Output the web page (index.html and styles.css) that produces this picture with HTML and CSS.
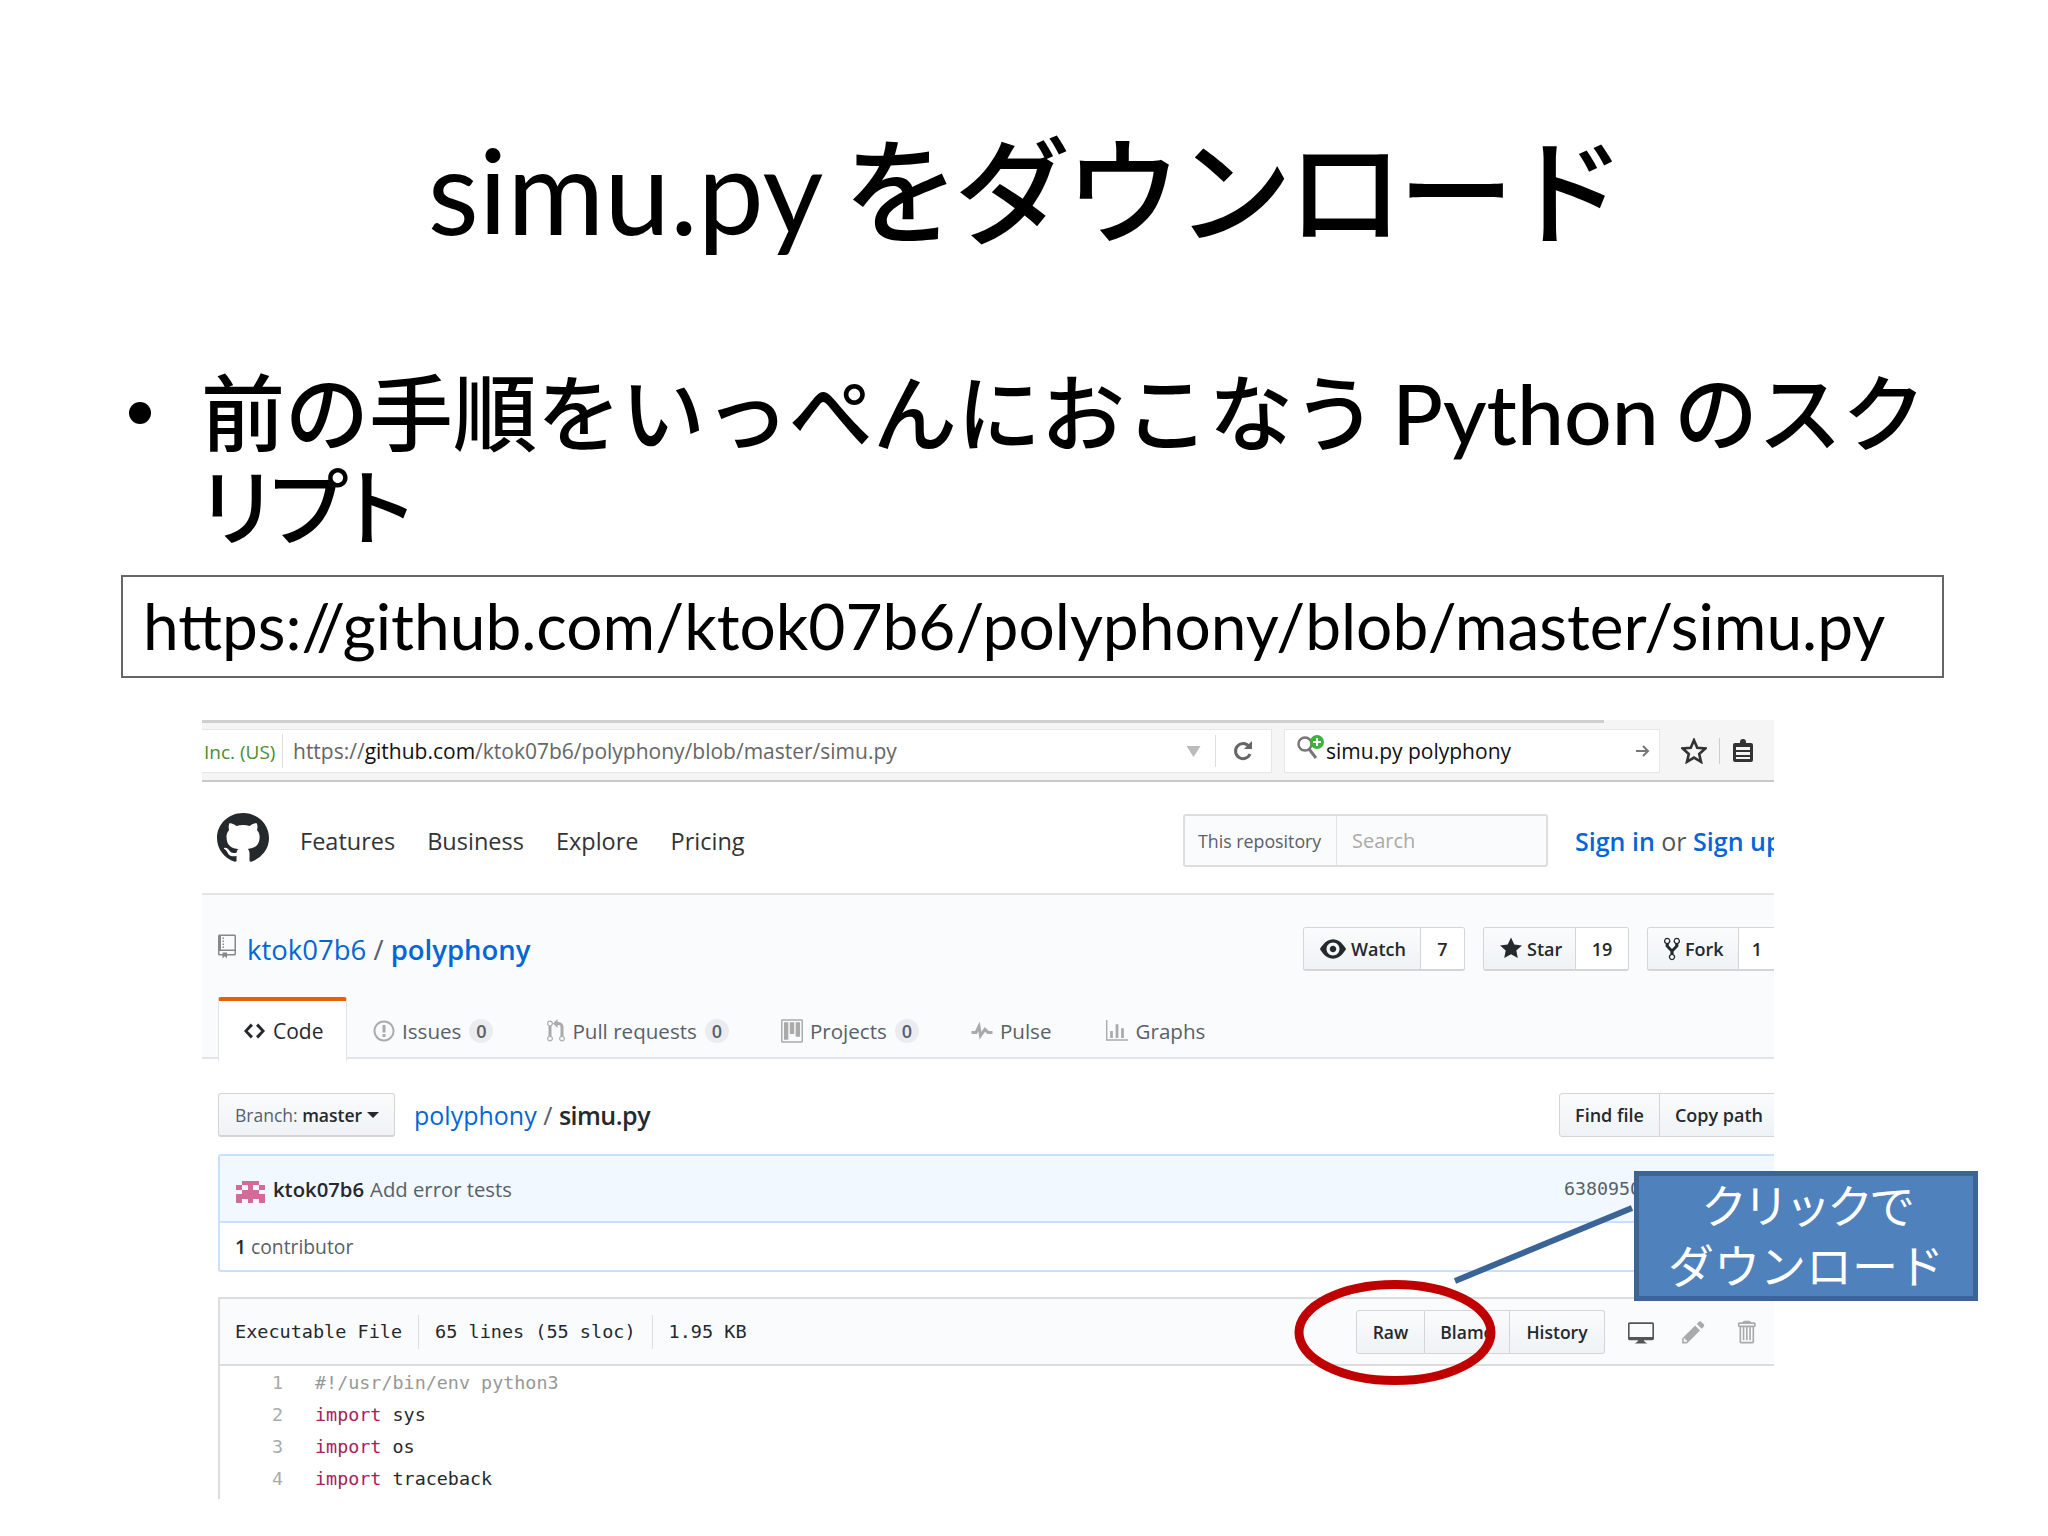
FILE: index.html
```html
<!DOCTYPE html>
<html lang="ja">
<head>
<meta charset="utf-8">
<title>simu.py をダウンロード</title>
<link rel="stylesheet" href="styles.css">
</head>
<body>
<main class="slide">
  <h1 class="title"><span class="lat">simu.py</span> <span class="kana">をダウンロード</span></h1>
  <ul class="bullets">
    <li><i class="dot"></i><div class="b-text">前の手順をいっぺんにおこなう Python のスク<span class="tail">リプト</span></div></li>
  </ul>
  <div class="urlbox">https://github.com/ktok07b6/polyphony/blob/master/simu.py</div>

  <section class="shot">
    <div class="browser">
      <div class="topline"></div>
      <div class="browser-row">
        <div class="addr">
          <span class="inc">Inc. (US)</span>
          <span class="addr-url">https://<b>github.com</b>/ktok07b6/polyphony/blob/master/simu.py</span>
          <svg class="b-drop" viewBox="0 0 14 12"><path d="M0 1h14L7 12z"/></svg>
          <span class="addr-sep"></span>
          <svg class="b-reload" viewBox="0 0 20 22"><path d="M16 6.500A7.500 7.500 0 1 0 17 14" fill="none" stroke="#666" stroke-width="3"/><path d="M11 9h8V1z" fill="#666"/></svg>
        </div>
        <div class="find">
          <svg class="b-search" viewBox="0 0 30 28"><circle cx="9" cy="10" r="6.500" fill="none" stroke="#777" stroke-width="2.400"/><path d="M13 15l7 9" stroke="#777" stroke-width="3"/><circle cx="21" cy="8" r="7" fill="#3bb33b"/><path d="M21 4v8M17 8h8" stroke="#fff" stroke-width="2"/></svg>
          <span class="find-text">simu.py polyphony</span>
          <svg class="b-arrow" viewBox="0 0 16 16"><path d="M1 8h12M8 3l5 5-5 5" fill="none" stroke="#777" stroke-width="2"/></svg>
        </div>
        <svg class="b-star" viewBox="0 0 24 24"><path d="M12 2l3 7 7.500.7-5.700 5 1.700 7.300-6.500-3.900-6.500 3.900 1.700-7.300-5.700-5L9 9z" fill="none" stroke="#333" stroke-width="2.400"/></svg>
        <span class="b-sep"></span>
        <svg class="b-clip" viewBox="0 0 22 24"><path d="M8 4V3a3 3 0 0 1 6 0v1h5a2 2 0 0 1 2 2v15a2 2 0 0 1-2 2H3a2 2 0 0 1-2-2V6a2 2 0 0 1 2-2z" fill="#333"/><path d="M4 8h14v3H4zM4 13h14v3H4zM4 18h14v2H4z" fill="#f5f5f5"/></svg>
      </div>
    </div>

    <header class="gh-header">
      <svg class="gh-logo" viewBox="0 0 16 16" preserveAspectRatio="none"><path d="M8 0C3.58 0 0 3.58 0 8c0 3.54 2.29 6.53 5.47 7.59.4.07.55-.17.55-.38 0-.19-.01-.82-.01-1.49-2.01.37-2.53-.49-2.69-.94-.09-.23-.48-.94-.82-1.130-.28-.15-.68-.52-.01-.53.63-.01 1.08.58 1.23.82.72 1.21 1.87.87 2.33.66.07-.52.28-.87.51-1.070-1.78-.2-3.64-.89-3.64-3.950 0-.87.31-1.590.82-2.150-.08-.2-.36-1.020.08-2.120 0 0 .67-.21 2.2.82.64-.18 1.320-.27 2-.27.68 0 1.360.09 2 .27 1.530-1.040 2.200-.82 2.200-.82.44 1.100.16 1.920.08 2.120.51.56.82 1.270.82 2.150 0 3.070-1.870 3.750-3.650 3.950.29.25.54.73.54 1.480 0 1.070-.01 1.930-.01 2.200 0 .21.15.46.55.38A8.013 8.013 0 0 0 16 8c0-4.420-3.580-8-8-8z"/></svg>
      <nav class="gh-nav"><a>Features</a><a>Business</a><a>Explore</a><a>Pricing</a></nav>
      <div class="gh-search"><span class="scope">This repository</span><span class="placeholder">Search</span></div>
      <div class="sign"><a>Sign in</a> or <a>Sign up</a></div>
    </header>

    <div class="repohead">
      <div class="repo-row">
        <svg class="repo-icon" viewBox="0 0 12 16"><path d="M4 9H3V8h1v1zm0-3H3v1h1V6zm0-2H3v1h1V4zm0-2H3v1h1V2zm8-1v12c0 .55-.45 1-1 1H6v2l-1.500-1.500L3 16v-2H1c-.55 0-1-.45-1-1V1c0-.55.45-1 1-1h10c.55 0 1 .45 1 1zm-1 10H1v2h2v-1h3v1h5v-2zm0-10H2v9h9V1z"/></svg>
        <h2 class="repo-name"><a>ktok07b6</a> <span class="slash">/</span> <a class="strong">polyphony</a></h2>
        <div class="actions">
          <div class="social watch"><span class="s-btn"><svg class="s-eye" viewBox="0 0 16 16"><path d="M8.060 2C3 2 0 8 0 8s3 6 8.060 6C13 14 16 8 16 8s-3-6-7.940-6zM8 12c-2.200 0-4-1.780-4-4 0-2.200 1.800-4 4-4 2.220 0 4 1.800 4 4 0 2.220-1.780 4-4 4zm2-4c0 1.110-.89 2-2 2-1.110 0-2-.89-2-2 0-1.110.89-2 2-2 1.110 0 2 .89 2 2z"/></svg>Watch</span><span class="s-count">7</span></div>
          <div class="social star"><span class="s-btn"><svg class="s-star" viewBox="0 0 14 16"><path d="M14 6l-4.900-.64L7 1 4.900 5.360 0 6l3.600 3.260L2.670 14 7 11.670 11.330 14l-.93-4.740L14 6z"/></svg>Star</span><span class="s-count">19</span></div>
          <div class="social fork"><span class="s-btn"><svg class="s-fork" viewBox="0 0 10 16"><path d="M8 1a1.993 1.993 0 0 0-1 3.720V6L5 8 3 6V4.720A1.993 1.993 0 0 0 2 1a1.993 1.993 0 0 0-1 3.720V6.500l3 3v1.780A1.993 1.993 0 0 0 5 15a1.993 1.993 0 0 0 1-3.720V9.500l3-3V4.720A1.993 1.993 0 0 0 8 1zM2 4.200C1.340 4.200.8 3.650.8 3c0-.65.55-1.200 1.200-1.200.65 0 1.200.55 1.200 1.200 0 .65-.55 1.200-1.200 1.200zm3 10c-.66 0-1.200-.55-1.200-1.200 0-.65.55-1.200 1.200-1.200.65 0 1.200.55 1.200 1.200 0 .65-.55 1.200-1.200 1.200zm3-10c-.66 0-1.200-.55-1.200-1.200 0-.65.55-1.200 1.200-1.200.65 0 1.200.55 1.200 1.200 0 .65-.55 1.200-1.200 1.200z"/></svg>Fork</span><span class="s-count">1</span></div>
        </div>
      </div>
      <div class="tabs">
        <a class="tab active"><svg class="t-code" viewBox="0 0 14 16"><path d="M9.500 3L8 4.500 11.500 8 8 11.500 9.500 13 14 8 9.500 3zm-5 0L0 8l4.500 5L6 11.500 2.500 8 6 4.500 4.500 3z"/></svg>Code</a>
        <a class="tab t-issues"><svg class="t-ico" viewBox="0 0 14 16"><path d="M7 2.300c3.140 0 5.700 2.560 5.700 5.700s-2.560 5.700-5.700 5.700A5.710 5.710 0 0 1 1.300 8c0-3.140 2.560-5.700 5.700-5.700zM7 1C3.140 1 0 4.140 0 8s3.140 7 7 7 7-3.140 7-7-3.140-7-7-7zm1 3H6v5h2V4zm0 6H6v2h2v-2z"/></svg>Issues<span class="counter">0</span></a>
        <a class="tab t-pulls"><svg class="t-ico" viewBox="0 0 12 16"><path d="M11 11.280V5c-.03-.78-.34-1.470-.94-2.060C9.460 2.350 8.780 2.030 8 2H7V0L4 3l3 3V4h1c.27.02.48.11.69.31.21.2.3.42.31.69v6.280A1.993 1.993 0 0 0 10 15a1.993 1.993 0 0 0 1-3.720zm-1 2.920c-.66 0-1.200-.55-1.200-1.200 0-.65.55-1.200 1.200-1.200.65 0 1.200.55 1.200 1.200 0 .65-.55 1.200-1.200 1.200zM4 3c0-1.110-.89-2-2-2a1.993 1.993 0 0 0-1 3.720v6.560A1.993 1.993 0 0 0 2 15a1.993 1.993 0 0 0 1-3.720V4.720c.59-.34 1-.98 1-1.720zm-.8 10c0 .66-.55 1.200-1.200 1.200-.65 0-1.200-.55-1.200-1.200 0-.65.55-1.200 1.200-1.200.65 0 1.200.55 1.200 1.200zM2 4.200C1.340 4.200.8 3.650.8 3c0-.65.55-1.200 1.200-1.200.65 0 1.200.55 1.200 1.200 0 .65-.55 1.200-1.200 1.200z"/></svg>Pull requests<span class="counter">0</span></a>
        <a class="tab t-projects"><svg class="t-ico" viewBox="0 0 15 16"><path d="M10 12h3V2h-3v10zm-4-2h3V2H6v8zm-4 4h3V2H2v12zm-1 1h13V1H1v14zM14 0H1a1 1 0 0 0-1 1v14a1 1 0 0 0 1 1h13a1 1 0 0 0 1-1V1a1 1 0 0 0-1-1z"/></svg>Projects<span class="counter">0</span></a>
        <a class="tab t-pulse"><svg class="t-ico" viewBox="0 0 14 16"><path d="M11.500 8L8.800 5.400 6.600 8.500 5.500 1.600 2.380 8H0v2h3.600l.9-1.800.9 5.400L9 8.500l1.600 1.500H14V8h-2.500z"/></svg>Pulse</a>
        <a class="tab t-graphs"><svg class="t-ico" viewBox="0 0 16 16"><path d="M16 14v1H0V0h1v14h15zM5 13H3V8h2v5zm4 0H7V3h2v10zm4 0h-2V6h2v7z"/></svg>Graphs</a>
      </div>
    </div>

    <div class="filebar">
      <span class="branch">Branch: <b>master</b><i class="caret"></i></span>
      <div class="crumb"><a>polyphony</a> <span class="slash">/</span> <b>simu.py</b></div>
      <div class="btn-group filebtns"><span class="btn b-find">Find file</span><span class="btn b-copy">Copy path</span></div>
    </div>

    <div class="commit">
      <div class="commit-top">
        <svg class="identicon" viewBox="0 0 5 5" preserveAspectRatio="none" shape-rendering="crispEdges"><path fill="#d36b98" d="M1 0h3v1H1zM0 1h1v1H0zM2 1h1v1H2zM4 1h1v1H4zM1 2h3v1H1zM0 3h5v1H0zM0 4h1v1H0zM2 4h1v1H2zM4 4h1v1H4z"/></svg>
        <b class="author">ktok07b6</b><span class="message">Add error tests</span>
        <code class="sha">6380950</code>
      </div>
      <div class="contrib"><b>1</b> contributor</div>
    </div>

    <div class="file">
      <div class="file-head">
        <span class="info">Executable File</span><span class="info">65 lines (55 sloc)</span><span class="info">1.95 KB</span>
        <div class="btn-group rawbtns"><span class="btn b-raw">Raw</span><span class="btn b-blame">Blame</span><span class="btn b-hist">History</span></div>
        <svg class="f-ico desk" viewBox="0 0 16 16"><path d="M15 2H1c-.55 0-1 .45-1 1v9c0 .55.45 1 1 1h5.340c-.25.61-.86 1.390-2.340 2h8c-1.480-.61-2.090-1.390-2.340-2H15c.55 0 1-.45 1-1V3c0-.55-.45-1-1-1zm0 9H1V3h14v8z"/></svg>
        <svg class="f-ico pen" viewBox="0 0 14 16"><path d="M0 12v3h3l8-8-3-3-8 8zm3 2H1v-2h1v1h1v1zm10.300-9.300L12 6 9 3l1.300-1.300a.996.996 0 0 1 1.410 0l1.590 1.590c.39.39.39 1.020 0 1.410z"/></svg>
        <svg class="f-ico bin" viewBox="0 0 12 16"><path d="M11 2H9c0-.55-.45-1-1-1H5c-.55 0-1 .45-1 1H2c-.55 0-1 .45-1 1v1c0 .55.45 1 1 1v9c0 .55.45 1 1 1h7c.55 0 1-.45 1-1V5c.55 0 1-.45 1-1V3c0-.55-.45-1-1-1zm-1 12H3V5h1v8h1V5h1v8h1V5h1v8h1V5h1v9zm1-10H2V3h9v1z"/></svg>
      </div>
      <div class="code">
        <div class="ln"><span class="num">1</span><span class="cm">#!/usr/bin/env python3</span></div>
        <div class="ln"><span class="num">2</span><span class="kw">import</span><span> sys</span></div>
        <div class="ln"><span class="num">3</span><span class="kw">import</span><span> os</span></div>
        <div class="ln"><span class="num">4</span><span class="kw">import</span><span> traceback</span></div>
      </div>
    </div>
  </section>

  <svg class="marks" viewBox="0 0 2048 1536">
    <line x1="1455" y1="1281" x2="1632" y2="1208" class="leader"/>
    <ellipse cx="1395" cy="1332.500" rx="96" ry="48" class="ring"/>
  </svg>
  <div class="callout"><span class="call-1">クリックで</span><br>ダウンロード</div>
</main>
</body>
</html>
```
FILE: styles.css
```css
* { box-sizing: border-box; }
html, body { margin: 0; padding: 0; background: #fff; }
svg { fill-rule: evenodd; flex: none; }
.slide {
  position: relative;
  width: 2048px;
  height: 1536px;
  overflow: hidden;
  color: #000;
  font-family: "Lato", "Noto Sans CJK JP", sans-serif;
}
.title {
  margin: 0;
  padding-top: 120px;
  height: 260px;
  font-size: 109px;
  line-height: 140px;
  font-weight: 400;
  text-align: center;
  white-space: nowrap;
}
.lat { font-size: 118px; }
.kana { font-size: 116px; letter-spacing: -5px; font-weight: 500; margin-left: -8px; }
.bullets { margin: 106px 70px 0 129px; padding: 0; list-style: none; }
.bullets li { display: flex; }
.dot { flex: none; width: 22px; height: 22px; margin: 36px 50px 0 0; border-radius: 50%; background: #000; }
.b-text { font-size: 84px; line-height: 94px; word-spacing: -6px; font-weight: 500; }
.tail { display: block; letter-spacing: -14px; margin-left: -6px; }
.urlbox {
  margin: 21px 104px 0 121px;
  height: 103px;
  padding-left: 20px;
  border: 2px solid #666;
  font-size: 64px;
  line-height: 98px;
  white-space: nowrap;
}

/* Screenshot */
.shot {
  margin: 42px 0 0 202px;
  width: 1572px;
  height: 780px;
  overflow: hidden;
  font-family: "Open Sans", "Noto Sans", sans-serif;
  font-size: 22px;
  color: #24292e;
}
.browser { height: 62px; background: #f5f5f5; border-bottom: 2px solid #c8c8c8; }
.topline { width: 1402px; height: 3px; background: #cfcfcf; }
.browser-row { display: flex; align-items: center; padding-top: 6px; }
.addr {
  display: flex;
  align-items: center;
  width: 1070px;
  height: 44px;
  background: #fff;
  border: 1px solid #e6e6e6;
  border-left: 0;
}
.inc {
  width: 81px;
  padding-left: 2px;
  height: 34px;
  line-height: 36px;
  border-right: 1px solid #ddd;
  color: #4c8c2b;
  font-size: 19px;
  white-space: nowrap;
}
.addr-url { margin-left: 10px; color: #666; font-size: 21px; line-height: 48px; white-space: nowrap; }
.addr-url b { font-weight: 400; color: #111; }
.b-drop { width: 15px; height: 12px; margin-left: auto; fill: #bbb; }
.addr-sep { width: 1px; height: 32px; background: #ddd; margin-left: 14px; }
.b-reload { width: 20px; height: 22px; margin: 0 18px 0 17px; }
.find {
  display: flex;
  align-items: center;
  width: 376px;
  height: 44px;
  margin-left: 12px;
  background: #fff;
  border: 1px solid #e6e6e6;
  padding: 0 8px 0 11px;
}
.b-search { width: 30px; height: 28px; margin: -6px 0 0 0; }
.find-text { font-size: 21px; line-height: 48px; color: #111; white-space: nowrap; }
.b-arrow { width: 16px; height: 16px; margin-left: auto; }
.b-star { width: 26px; height: 26px; margin-left: 21px; }
.b-sep { width: 1px; height: 26px; background: #ccc; margin: 0 12px; }
.b-clip { width: 22px; height: 24px; }

.gh-header {
  display: flex;
  align-items: center;
  height: 113px;
  padding-left: 15px;
  background: #fff;
  border-bottom: 2px solid #e5e5e5;
}
.gh-logo { width: 52px; height: 50px; fill: #24292e; }
.gh-nav { display: flex; gap: 32px; margin: 7px 0 0 31px; font-size: 23.500px; color: #333; }
.gh-search {
  display: flex;
  margin-left: auto;
  width: 365px;
  height: 53px;
  margin-top: 6px;
  background: #fafbfc;
  border: 2px solid #ddd;
  border-radius: 3px;
  font-size: 17.800px;
  line-height: 50px;
}
.scope { width: 152px; padding-left: 13px; border-right: 1px solid #e4e4e4; color: #586069; white-space: nowrap; }
.placeholder { padding-left: 15px; color: #aaa; font-size: 20px; }
.sign { flex: none; width: 199px; margin: 7px 0 0 27px; font-size: 25px; color: #555; white-space: nowrap; }
.sign a { color: #0366d6; font-weight: 600; }

.repohead { height: 164px; padding-top: 32px; background: #fafbfc; border-bottom: 2px solid #e1e4e8; }
.repo-row { display: flex; align-items: center; height: 44px; padding-left: 16px; }
.repo-icon { width: 18px; height: 25px; fill: #888; margin-top: -6px; }
.repo-name { margin: 0 0 0 11px; font-size: 27.500px; font-weight: 400; color: #0366d6; white-space: nowrap; }
.repo-name .slash { color: #586069; }
.repo-name .strong { font-weight: 600; }
.actions { display: flex; gap: 18px; margin-left: auto; margin-right: -1px; }
.social {
  display: flex;
  height: 44px;
  border: 1px solid #d5d5d5;
  border-bottom-width: 2px;
  border-radius: 3px;
  font-size: 18px;
  overflow: hidden;
  background: #fff;
}
.social.fork { border-right: 0; border-radius: 3px 0 0 3px; }
.s-btn {
  display: flex;
  align-items: center;
  padding-left: 16px;
  background: linear-gradient(#fafbfc, #eff3f6);
  border-right: 1px solid #d5d5d5;
  color: #24292e;
  font-weight: 600;
}
.watch .s-btn { width: 117px; }
.star .s-btn { width: 92px; }
.fork .s-btn { width: 91px; }
.s-count { display: flex; align-items: center; justify-content: center; background: #fff; font-weight: 600; }
.watch .s-count { width: 43px; }
.star .s-count { width: 52px; }
.fork .s-count { width: 36px; }
.s-eye { width: 26px; height: 26px; margin-right: 5px; fill: #24292e; }
.s-star { width: 22px; height: 25px; margin-right: 5px; fill: #24292e; }
.s-fork { width: 16px; height: 30px; margin-right: 5px; fill: #24292e; }

.tabs { display: flex; align-items: stretch; height: 62px; margin: 26px 0 0 16px; font-size: 20.600px; color: #586069; }
.tab { display: flex; align-items: center; padding-top: 6px; white-space: nowrap; }
.tab.active {
  width: 129px;
  padding: 0 0 0 24px;
  background: #fff;
  border: 1px solid #e1e4e8;
  border-top: 4px solid #e36209;
  border-bottom: 0;
  border-radius: 3px 3px 0 0;
  margin-bottom: -2px;
  color: #24292e;
  font-size: 21px;
}
.t-code { width: 23px; height: 24px; margin-right: 7px; fill: #24292e; }
.t-ico { width: 22px; height: 24px; margin-right: 7px; fill: #aaa; }
.t-issues { margin-left: 26px; }
.t-pulls { margin-left: 52px; }
.t-pulls .t-ico { margin-right: 5px; }
.t-projects { margin-left: 52px; }
.t-pulse { margin-left: 52px; }
.t-graphs { margin-left: 54px; }
.t-graphs .t-ico { margin-right: 8px; }
.counter {
  display: inline-block;
  margin-left: 8px;
  width: 24px;
  text-align: center;
  border-radius: 12px;
  background: #eaecef;
  font-size: 18px;
  line-height: 24px;
  font-weight: 600;
}

.filebar { display: flex; align-items: flex-start; height: 95px; padding: 34px 0 0 16px; }
.branch {
  display: flex;
  align-items: center;
  width: 177px;
  height: 44px;
  padding-left: 16px;
  border: 1px solid #d5d5d5;
  border-bottom-width: 2px;
  border-radius: 3px;
  background: linear-gradient(#fafbfc, #eff3f6);
  color: #586069;
  font-size: 17.500px;
  white-space: pre;
}
.branch b { color: #24292e; font-weight: 600; }
.caret { margin-left: 5px; border: 6px solid transparent; border-top-color: #24292e; border-bottom: 0; }
.crumb { margin-left: 19px; font-size: 25px; line-height: 44px; color: #586069; white-space: nowrap; }
.crumb a { color: #0366d6; }
.crumb b { color: #24292e; font-weight: 600; letter-spacing: -0.500px; }
.btn-group { display: flex; height: 44px; }
.btn {
  display: flex;
  align-items: center;
  justify-content: center;
  border: 1px solid #d5d5d5;
  border-left-width: 0;
  background: linear-gradient(#fafbfc, #eff3f6);
  font-size: 18px;
  font-weight: 600;
  white-space: nowrap;
}
.btn:first-child { border-left-width: 1px; border-radius: 3px 0 0 3px; }
.btn:last-child { border-radius: 0 3px 3px 0; }
.filebtns { margin-left: auto; }
.b-find { width: 101px; }
.b-copy { width: 114px; padding-left: 4px; border-right: 0; border-radius: 0 !important; }

.commit { margin-left: 16px; border: 2px solid #c8e1ff; border-right: 0; border-radius: 3px 0 0 3px; height: 118px; }
.commit-top {
  display: flex;
  align-items: center;
  height: 67px;
  padding-left: 16px;
  background: #f1f8ff;
  border-bottom: 2px solid #c8e1ff;
  font-size: 20.300px;
}
.identicon { width: 29px; height: 22px; margin-top: 6px; }
.author { margin-left: 8px; font-weight: 600; }
.message { margin-left: 6px; color: #586069; }
.sha { margin-left: auto; font: 18.300px "DejaVu Sans Mono", monospace; color: #586069; width: 210px; }
.contrib { height: 47px; padding-left: 15px; font-size: 19.300px; line-height: 48px; color: #586069; }
.contrib b { color: #24292e; font-weight: 600; }

.file { margin: 25px 0 0 16px; border-left: 2px solid #ddd; }
.file-head {
  display: flex;
  align-items: center;
  height: 69px;
  background: #fafbfc;
  border-top: 2px solid #ddd;
  border-bottom: 2px solid #ddd;
  font: 18.500px "DejaVu Sans Mono", monospace;
  color: #24292e;
}
.info { height: 34px; line-height: 34px; padding: 0 16px; border-left: 1px solid #ddd; white-space: pre; }
.info:first-child { border-left: 0; padding-left: 15px; }
.rawbtns { margin-left: auto; }
.rawbtns .btn { font-family: "Open Sans", sans-serif; font-size: 17.500px; }
.b-raw { width: 69px; }
.b-blame { width: 85px; }
.b-hist { width: 95px; }
.f-ico { height: 26px; fill: #666; }
.desk { width: 26px; margin: 0 28px 0 23px; fill: #555; }
.pen { width: 23px; margin-right: 31px; fill: #aaa; }
.bin { width: 20px; margin-right: 18px; fill: #aaa; }
.code { padding-top: 1px; font: 18.400px/32px "DejaVu Sans Mono", monospace; color: #24292e; height: 133px; }
.ln { display: flex; height: 32px; white-space: pre; }
.num { width: 95px; padding-right: 32px; text-align: right; color: #aaa; }
.cm { color: #969896; }
.kw { color: #a71d5d; }

/* Slide annotations drawn over the screenshot */
.marks { position: absolute; inset: 0; width: 2048px; height: 1536px; pointer-events: none; }
.leader { stroke: #3b6496; stroke-width: 6; }
.ring { fill: none; stroke: #c00000; stroke-width: 9; }
.callout {
  position: absolute;
  left: 1634px;
  top: 1171px;
  width: 344px;
  height: 130px;
  padding-top: 0;
  background: #4f81bd;
  border: 5px solid #3c6595;
  color: #fff;
  font-size: 46px;
  line-height: 60px;
  text-align: center;
}
.call-1 { letter-spacing: -4px; }
```
